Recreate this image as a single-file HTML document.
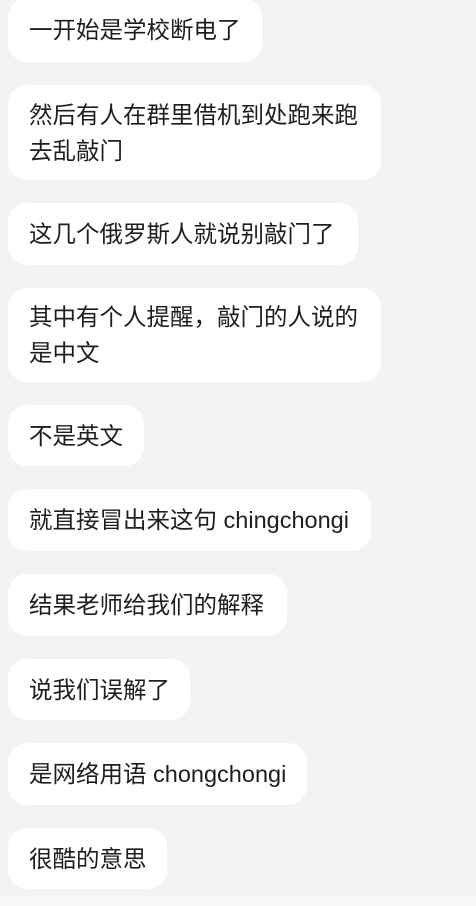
<!DOCTYPE html>
<html><head><meta charset="utf-8"><style>
html,body{margin:0;padding:0}
body{width:476px;height:906px;background:#f3f3f3;position:relative;overflow:hidden;font-family:"Liberation Sans","Noto Sans CJK SC",sans-serif;color:#1e1e1e}
.b{position:absolute;left:8px;background:#fff;border-radius:19px;box-sizing:border-box;padding:0 0 0 21px;display:flex;flex-direction:column;justify-content:center;font-size:23.5px;line-height:36px;white-space:nowrap}
.foot{position:absolute;left:0;top:896px;width:476px;height:10px;background:#f8f8f8}
</style></head><body>
<div class="b" style="top:-2px;height:64px;width:254px">一开始是学校断电了</div>
<div class="b" style="top:85px;height:95px;width:373px"><span>然后有人在群里借机到处跑来跑</span><span>去乱敲门</span></div>
<div class="b" style="top:203px;height:62px;width:350px">这几个俄罗斯人就说别敲门了</div>
<div class="b" style="top:288px;height:94px;width:373px"><span>其中有个人提醒，敲门的人说的</span><span>是中文</span></div>
<div class="b" style="top:405px;height:61px;width:136px">不是英文</div>
<div class="b" style="top:489px;height:62px;width:363px">就直接冒出来这句 chingchongi</div>
<div class="b" style="top:574px;height:62px;width:279px">结果老师给我们的解释</div>
<div class="b" style="top:659px;height:61px;width:182px">说我们误解了</div>
<div class="b" style="top:743px;height:62px;width:299px">是网络用语 chongchongi</div>
<div class="b" style="top:828px;height:61px;width:159px">很酷的意思</div>
<div class="foot"></div>
</body></html>
